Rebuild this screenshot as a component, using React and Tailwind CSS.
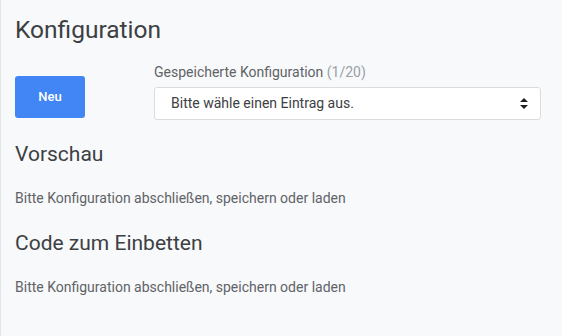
import React from 'react';

const App = () => {
  return (
    <div
      className="w-[562px] h-[336px] bg-[#f8f9fa] border-l border-[#e3e5e8] text-[#3c4043] overflow-hidden"
      style={{ fontFamily: 'Roboto, "Noto Sans", sans-serif' }}
    >
      <div className="px-[14px] pt-[14px]">
        <h1 className="text-[24.5px] leading-[32px] text-[#3c4043]">Konfiguration</h1>

        <div className="flex items-start gap-[69px] mt-[18px]">
          <button className="mt-[12px] w-[70px] h-[42px] rounded-[3px] bg-[#4285f4] text-white text-[13px] font-medium">
            Neu
          </button>
          <div className="flex-1 mr-[7px]">
            <label className="block text-[14px] leading-[16px] text-[#5f6368] mb-[7px]">
              Gespeicherte Konfiguration <span className="text-[#9aa0a6]">(1/20)</span>
            </label>
            <div className="h-[33px] bg-white border border-[#dadce0] rounded-[3px] flex items-center justify-between pl-[16px] pr-[12px]">
              <span className="text-[14px] text-[#3c4043]">Bitte wähle einen Eintrag aus.</span>
              <svg width="8" height="11" viewBox="0 0 8 11" fill="#202124">
                <path d="M4 0 L8 4 H0 Z" />
                <path d="M0 7 H8 L4 11 Z" />
              </svg>
            </div>
          </div>
        </div>

        <h2 className="text-[21px] leading-[28px] mt-[20px]">Vorschau</h2>
        <p className="text-[14px] leading-[20px] text-[#5f6368] mt-[20px]">
          Bitte Konfiguration abschließen, speichern oder laden
        </p>

        <h2 className="text-[21px] leading-[28px] mt-[21px]">Code zum Einbetten</h2>
        <p className="text-[14px] leading-[20px] text-[#5f6368] mt-[20px]">
          Bitte Konfiguration abschließen, speichern oder laden
        </p>
      </div>
    </div>
  );
};

export default App;
